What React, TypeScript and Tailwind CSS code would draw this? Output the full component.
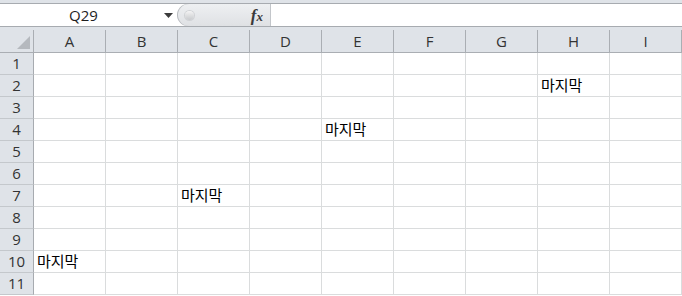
import React from 'react';

const columns = ['A', 'B', 'C', 'D', 'E', 'F', 'G', 'H', 'I'];
const rowNumbers = [1, 2, 3, 4, 5, 6, 7, 8, 9, 10, 11];

// row number -> column index holding the text
const cells: Record<number, number> = { 2: 7, 4: 4, 7: 2, 10: 0 };

const FormulaBar = () => (
  <div className="h-[30px] bg-[#dfe3e8] pt-[3px]">
    <div className="flex h-[24px] border-y border-[#a7abb0] bg-white">
      <div className="relative flex w-[177px] items-center justify-center pr-[10px] text-[15px] text-[#1e1e1e]">
        <span className="mt-[1px]">Q29</span>
        <svg className="absolute right-[4px] top-[9px]" width="9" height="5" viewBox="0 0 9 5">
          <path d="M0 0H9L4.5 5Z" fill="#3c3c3c" />
        </svg>
      </div>
      <div className="flex w-[94px] items-center rounded-l-full border-r border-[#c3c6ca] bg-gradient-to-b from-[#eef0f2] to-[#dfe1e4] shadow-[inset_1px_0_0_#b9bcc0]">
        <div className="ml-[8px] h-[9px] w-[9px] rounded-full bg-gradient-to-b from-[#f4f4f4] to-[#c8cacd] shadow-[0_0_0_1px_#d0d2d5]" />
        <span className="ml-auto mr-[7px] font-['Liberation_Serif',serif] text-[17px] font-bold italic leading-none text-[#3a3a3a]">
          f<span className="text-[13px]">x</span>
        </span>
      </div>
      <div className="flex-1" />
    </div>
  </div>
);

const App = () => {
  return (
    <div className="h-[296px] w-[682px] overflow-hidden bg-white font-['Open_Sans','Noto_Sans_CJK_KR',sans-serif]">
      <FormulaBar />
      <div className="grid grid-cols-[34px_repeat(9,72px)]">
        <div className="relative h-[23px] border-b border-r border-[#aaaeb3] bg-[#dfe3e8]">
          <svg className="absolute bottom-[3px] right-[3px]" width="13" height="13" viewBox="0 0 13 13">
            <path d="M13 0V13H0Z" fill="#b5b9be" />
          </svg>
        </div>
        {columns.map((c) => (
          <div
            key={c}
            className="flex h-[23px] items-center justify-center border-b border-r border-[#aaaeb3] bg-[#dfe3e8] text-[15px] text-[#333]"
          >
            {c}
          </div>
        ))}
        {rowNumbers.map((r) => (
          <React.Fragment key={r}>
            <div className="flex h-[22px] items-center justify-center border-b border-r border-b-[#c4c8cc] border-r-[#a7abb0] bg-[#dfe3e8] text-[15px] text-[#333]">
              {r}
            </div>
            {columns.map((c, i) => (
              <div
                key={c}
                className="flex h-[22px] items-center whitespace-nowrap border-b border-r border-[#dadcdd] pl-[3px] font-['Noto_Sans_CJK_KR',sans-serif] text-[15px] text-black"
              >
                {cells[r] === i ? '마지막' : ''}
              </div>
            ))}
          </React.Fragment>
        ))}
      </div>
    </div>
  );
};

export default App;
